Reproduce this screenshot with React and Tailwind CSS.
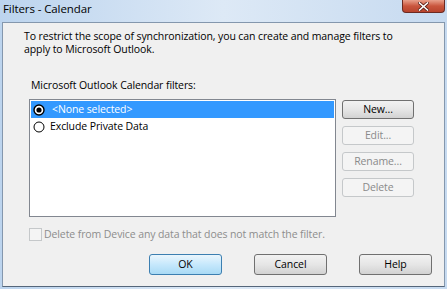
const font = { fontFamily: '"Open Sans", "Noto Sans", sans-serif' };

const Radio = ({ checked }) => (
    <svg width="12" height="12" viewBox="0 0 12 12" className="shrink-0">
        <circle cx="6" cy="6" r="5" fill="#fff" stroke="#000" strokeWidth={checked ? 1.4 : 1} />
        {checked && <circle cx="6" cy="6" r="2.6" fill="#000" />}
    </svg>
);

const SideButton = ({ label, disabled }) => (
    <div
        className={`h-[19px] w-[72px] rounded-[3px] border flex items-center justify-center text-[10.5px] tracking-[-0.1px] leading-none ${
            disabled
                ? 'border-[#c5c8ca] bg-[#f4f4f4] text-[#8a8a8a]'
                : 'border-[#707070] bg-gradient-to-b from-[#f2f2f2] via-[#e6e6e6] to-[#d2d2d2] text-black'
        }`}
    >
        {label}
    </div>
);

const FooterButton = ({ label, primary }) => (
    <div
        className={`h-[21px] w-[73px] rounded-[3px] border flex items-center justify-center text-[10.5px] tracking-[-0.1px] leading-none text-black ${
            primary
                ? 'border-[#3c7fb1] bg-gradient-to-b from-[#eaf6fd] via-[#c6e8fc] to-[#a9daf5]'
                : 'border-[#707070] bg-gradient-to-b from-[#f2f2f2] via-[#e6e6e6] to-[#d2d2d2]'
        }`}
    >
        {label}
    </div>
);

export default function App() {
    return (
        <div
            className="w-[447px] h-[289px] flex flex-col bg-gradient-to-r from-[#bcd4ee] via-[#dde9f6] to-[#c6daf0]"
            style={font}
        >
            {/* title bar */}
            <div className="h-[22px] flex items-start justify-between shrink-0">
                <span className="pl-[3px] pt-[2px] text-[11.5px] tracking-[-0.1px] leading-[14px] text-black">Filters - Calendar</span>
                <div className="mr-[2px] w-[43px] h-[13px] rounded-b-[4px] border border-t-0 border-[#6b2a22] bg-gradient-to-b from-[#e8a08c] via-[#c9553d] to-[#b8442e] flex items-center justify-center">
                    <svg width="11" height="9" viewBox="0 0 11 9">
                        <path d="M1.5 1 L9.5 8 M9.5 1 L1.5 8" stroke="#5a2018" strokeWidth="3.2" strokeLinecap="square" />
                        <path d="M1.5 1 L9.5 8 M9.5 1 L1.5 8" stroke="#ffffff" strokeWidth="1.6" strokeLinecap="square" />
                    </svg>
                </div>
            </div>

            {/* client area */}
            <div className="ml-[2px] w-[443px] h-[265px] border border-[#8497ad] border-b-[#55667a] bg-[#f0f0f0] flex flex-col text-[10.5px] tracking-[-0.1px]">
                <p className="pl-[21px] pt-[7px] leading-[13px] text-black">
                    To restrict the scope of synchronization, you can create and manage filters to
                    <br />
                    apply to Microsoft Outlook.
                </p>

                <div className="pl-[26px] pt-[23px] flex flex-col">
                    <span className="pl-[2px] leading-[13px] text-black">Microsoft Outlook Calendar filters:</span>

                    <div className="mt-[7px] flex gap-[6px]">
                        <div className="w-[307px] h-[118px] border border-[#828790] bg-white p-[1px] flex flex-col">
                            <div className="h-[17px] bg-[#3399ff] flex items-center pl-[2px] gap-[7px] leading-none text-white">
                                <Radio checked />
                                <span>&lt;None selected&gt;</span>
                            </div>
                            <div className="h-[17px] flex items-center pl-[2px] gap-[5px] leading-none text-black">
                                <Radio />
                                <span>Exclude Private Data</span>
                            </div>
                        </div>

                        <div className="pt-[1px] flex flex-col gap-[7px]">
                            <SideButton label="New..." />
                            <SideButton label="Edit..." disabled />
                            <SideButton label="Rename..." disabled />
                            <SideButton label="Delete" disabled />
                        </div>
                    </div>

                    <div className="mt-[11px] flex items-center gap-[2px] leading-none text-[#8d8d8d]">
                        <div className="w-[13px] h-[13px] border border-[#c5c8ca] bg-[#f4f4f4]" />
                        <span>Delete from Device any data that does not match the filter.</span>
                    </div>
                </div>

                <div className="mt-[13px] pr-[12px] flex justify-end gap-[32px]">
                    <FooterButton label="OK" primary />
                    <FooterButton label="Cancel" />
                    <FooterButton label="Help" />
                </div>
            </div>
        </div>
    );
}
